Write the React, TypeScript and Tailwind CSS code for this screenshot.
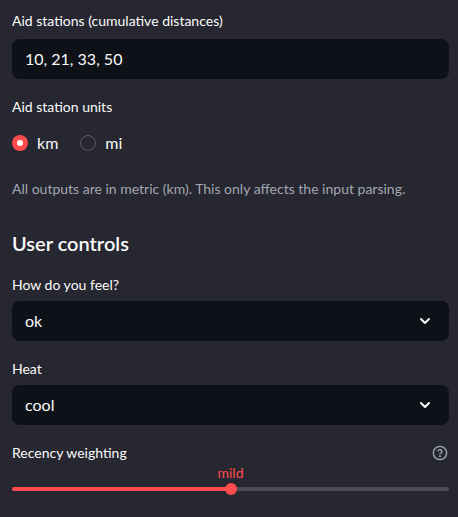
import React, { useState } from 'react';

const ChevronDown = () => (
  <svg width="16" height="16" viewBox="0 0 24 24" fill="none" stroke="#fafafa" strokeWidth="3" strokeLinecap="round" strokeLinejoin="round">
    <path d="M6 9l6 6 6-6" />
  </svg>
);

const HelpIcon = () => (
  <svg width="16" height="16" viewBox="0 0 24 24" fill="none" stroke="#a3a8b8" strokeWidth="2" strokeLinecap="round" strokeLinejoin="round">
    <circle cx="12" cy="12" r="10" />
    <path d="M9.1 9a3 3 0 0 1 5.8 1c0 2-3 3-3 3" />
    <circle cx="12" cy="17" r="0.6" fill="#a3a8b8" />
  </svg>
);

const Label = ({ children }: { children: React.ReactNode }) => (
  <div className="text-[14px] leading-5 text-[#fafafa]">{children}</div>
);

const Select = ({ value }: { value: string }) => (
  <div className="mt-[6px] h-10 rounded-lg bg-[#0e1117] flex items-center justify-between pl-[13px] pr-[16px] text-[16px] text-[#fafafa]">
    <span>{value}</span>
    <ChevronDown />
  </div>
);

export default function App() {
  const [units, setUnits] = useState('km');
  const sliderPct = 50;

  return (
    <div
      className="w-[458px] h-[517px] bg-[#262730] pl-3 pr-[9px] pt-[11px] overflow-hidden"
      style={{ fontFamily: '"Source Sans Pro", Lato, "Noto Sans", sans-serif' }}
    >
      <Label>Aid stations (cumulative distances)</Label>
      <div className="mt-[8px] h-10 rounded-lg bg-[#0e1117] flex items-center pl-[13px] text-[16px] text-[#fafafa]">
        10, 21, 33, 50
      </div>

      <div className="mt-[18px]">
        <Label>Aid station units</Label>
      </div>
      <div className="mt-[14px] flex items-center gap-[22px] h-6">
        {['km', 'mi'].map((u) => (
          <button key={u} type="button" onClick={() => setUnits(u)} className="flex items-center gap-[9px]">
            {units === u ? (
              <span className="w-4 h-4 rounded-full bg-[#ff4b4b] flex items-center justify-center">
                <span className="w-[6px] h-[6px] rounded-full bg-white" />
              </span>
            ) : (
              <span className="w-4 h-4 rounded-full border border-[#5a5c68]" />
            )}
            <span className="text-[16px] text-[#fafafa]">{u}</span>
          </button>
        ))}
      </div>

      <div className="mt-[24px] text-[14px] leading-5 text-[#a3a6b0]">
        All outputs are in metric (km). This only affects the input parsing.
      </div>

      <div className="mt-[30px] text-[20px] font-semibold leading-7 text-[#fafafa]">User controls</div>

      <div className="mt-[18px]">
        <Label>How do you feel?</Label>
      </div>
      <Select value="ok" />

      <div className="mt-[18px]">
        <Label>Heat</Label>
      </div>
      <Select value="cool" />

      <div className="mt-[18px] flex items-center justify-between">
        <Label>Recency weighting</Label>
        <span className="mr-[1px]"><HelpIcon /></span>
      </div>

      <div className="relative mt-[-1px] h-[36px]">
        <div
          className="absolute top-0 text-[14px] text-[#ff4b4b] -translate-x-1/2"
          style={{ left: `${sliderPct}%` }}
        >
          mild
        </div>
        <div className="absolute left-0 right-0 top-[25px] h-1 rounded-full bg-[#4a4b56]">
          <div className="h-1 rounded-full bg-[#ff4b4b]" style={{ width: `${sliderPct}%` }} />
        </div>
        <div
          className="absolute top-[21px] w-3 h-3 rounded-full bg-[#ff4b4b] -translate-x-1/2"
          style={{ left: `${sliderPct}%` }}
        />
      </div>
    </div>
  );
}
